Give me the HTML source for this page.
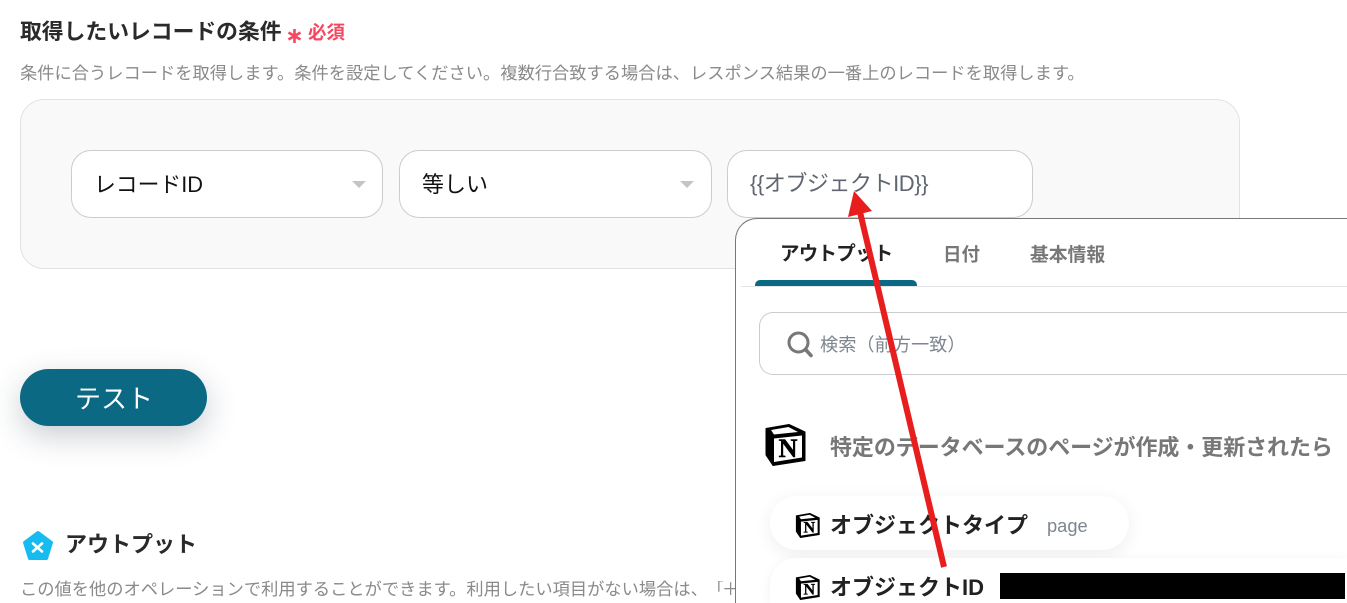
<!DOCTYPE html>
<html lang="ja"><head><meta charset="utf-8">
<style>
html,body{margin:0;padding:0;background:#fff;width:1347px;height:603px;overflow:hidden}
#p{position:relative;width:1347px;height:603px;overflow:hidden;font-family:"Liberation Sans","Noto Sans CJK JP",sans-serif;color:#222}
.t{position:absolute;white-space:nowrap;line-height:1}
.box{position:absolute;box-sizing:border-box;background:#fff;border:1px solid #ccc;border-radius:20px}
.tri{position:absolute;width:0;height:0;border-left:7px solid transparent;border-right:7px solid transparent;border-top:7px solid #c4c4c4}
</style></head><body><div id="p">
<div class="t" style="left:20px;top:21px;font-size:21.8px;font-weight:700;color:#2a2a2a">取得したいレコードの条件</div>
<svg style="position:absolute;left:287px;top:28px" width="15" height="16" viewBox="0 0 15 16"><path d="M7.500 1V15M1.500 4.500L13.500 11.500M13.500 4.500L1.500 11.500" stroke="#f5475f" stroke-width="2.600" fill="none"/></svg>
<div class="t" style="left:308px;top:24px;font-size:18.500px;font-weight:700;color:#f5475f">必須</div>
<div class="t" style="left:20px;top:65px;font-size:17.25px;color:#8a8a8a">条件に合うレコードを取得します。条件を設定してください。複数行合致する場合は、レスポンス結果の一番上のレコードを取得します。</div>

<div style="position:absolute;left:20px;top:99px;width:1220px;height:170px;box-sizing:border-box;background:#f9f9f9;border:1px solid #e2e2e2;border-radius:24px"></div>
<div class="box" style="left:71px;top:150px;width:312px;height:68px"></div>
<div class="t" style="left:94px;top:174px;font-size:21.8px;color:#111">レコードID</div>
<div class="tri" style="left:352px;top:181px"></div>
<div class="box" style="left:399px;top:150px;width:313px;height:68px"></div>
<div class="t" style="left:422px;top:174px;font-size:22px;color:#111">等しい</div>
<div class="tri" style="left:680px;top:181px"></div>
<div class="box" style="left:727px;top:150px;width:306px;height:68px"></div>
<div class="t" style="left:750px;top:173px;font-size:22px;letter-spacing:-.45px;color:#5f6670">{{オブジェクトID}}</div>

<div style="position:absolute;left:20px;top:369px;width:187px;height:57px;border-radius:29px;background:#0b6983;box-shadow:0 10px 30px rgba(40,60,75,.25)"></div>
<div class="t" style="left:75px;top:386px;font-size:26px;color:#fff">テスト</div>

<svg style="position:absolute;left:22px;top:530px" width="32" height="32" viewBox="0 0 32 32"><path d="M16 2.500L29.500 12.500L24.500 28.500H7.500L2.500 12.500z" fill="#16bcf0" stroke="#16bcf0" stroke-width="3" stroke-linejoin="round"/><path d="M11 13.500L20 21.500M20 13.500L11 21.500" stroke="#fff" stroke-width="2.600" stroke-linecap="round" fill="none"/></svg>
<div class="t" style="left:65px;top:534px;font-size:22px;font-weight:700;color:#2a2a2a">アウトプット</div>
<div class="t" style="left:20px;top:581px;font-size:17.25px;color:#8a8a8a">この値を他のオペレーションで利用することができます。利用したい項目がない場合は、</div>
<div class="t" style="left:707px;top:581px;width:16px;overflow:hidden;font-size:17.25px;color:#8a8a8a">「</div>
<div class="t" style="left:722px;top:581px;width:13px;overflow:hidden;font-size:17.25px;color:#8a8a8a">＋</div>

<div style="position:absolute;left:735px;top:218px;width:612px;height:385px;box-sizing:border-box;background:#fff;border:1px solid #777;border-right:0;border-bottom:0;border-radius:22px 0 0 0"></div>
<div class="t" style="left:780px;top:245px;font-size:19.5px;font-weight:700;letter-spacing:-.75px;color:#222">アウトプット</div>
<div class="t" style="left:943px;top:246px;font-size:18.500px;font-weight:700;color:#777">日付</div>
<div class="t" style="left:1030px;top:246px;font-size:18.800px;font-weight:700;color:#777">基本情報</div>
<div style="position:absolute;left:741px;top:286px;width:606px;height:1px;background:#e3e5e8"></div>
<div style="position:absolute;left:755px;top:280px;width:162px;height:6px;background:#0b6983;border-radius:5px 5px 0 0"></div>
<div style="position:absolute;left:759px;top:312px;width:588px;height:63px;box-sizing:border-box;background:#fff;border:1px solid #ccc;border-right:0;border-radius:14px 0 0 14px"></div>
<svg style="position:absolute;left:786px;top:330px" width="28" height="28" viewBox="0 0 28 28"><circle cx="12.500" cy="12.500" r="9.500" stroke="#777" stroke-width="3" fill="none"/><path d="M19.500 19.500L25 25.500" stroke="#777" stroke-width="3.600" stroke-linecap="round"/></svg>
<div class="t" style="left:820px;top:336px;font-size:18.200px;color:#7d8690">検索（前方一致）</div>

<svg style="position:absolute;left:764px;top:424px" width="42" height="42" viewBox="0 0 42 42"><path d="M2 4.500L25 0.500L41 8V36.500L9 41.500L2 31z" fill="#000" stroke="#000" stroke-linejoin="round"/><path d="M10 14.500L38 11.500V33.500L10 38z" fill="#fff"/><path d="M7 6L24.500 3L34 8L10 10.500z" fill="#fff"/><text x="24" y="33" font-family="Liberation Serif" font-size="26" font-weight="700" text-anchor="middle" fill="#000" stroke="#000" stroke-width=".6">N</text></svg>
<div class="t" style="left:830px;top:437px;font-size:22px;font-weight:700;letter-spacing:-.07px;color:#777">特定のデータベースのページが作成・更新されたら</div>

<div style="position:absolute;left:770px;top:496px;width:359px;height:54px;border-radius:27px;background:#fff;box-shadow:0 4px 18px rgba(0,0,0,.07)"></div>
<svg style="position:absolute;left:795px;top:513px" width="25" height="25" viewBox="0 0 42 42"><path d="M2 4.500L25 0.500L41 8V36.500L9 41.500L2 31z" fill="#000" stroke="#000" stroke-linejoin="round"/><path d="M10 14.500L38 11.500V33.500L10 38z" fill="#fff"/><path d="M7 6L24.500 3L34 8L10 10.500z" fill="#fff"/><text x="24" y="33" font-family="Liberation Serif" font-size="27" font-weight="700" text-anchor="middle" fill="#000" stroke="#000" stroke-width=".6">N</text></svg>
<div class="t" style="left:830px;top:515px;font-size:22px;font-weight:700;color:#222">オブジェクトタイプ</div>
<div class="t" style="left:1047px;top:517px;font-size:18.300px;color:#7d8690">page</div>

<div style="position:absolute;left:770px;top:558px;width:577px;height:45px;border-radius:27px 0 0 0;background:#fff;box-shadow:0 2px 12px rgba(0,0,0,.06)"></div>
<svg style="position:absolute;left:795px;top:575px" width="25" height="25" viewBox="0 0 42 42"><path d="M2 4.500L25 0.500L41 8V36.500L9 41.500L2 31z" fill="#000" stroke="#000" stroke-linejoin="round"/><path d="M10 14.500L38 11.500V33.500L10 38z" fill="#fff"/><path d="M7 6L24.500 3L34 8L10 10.500z" fill="#fff"/><text x="24" y="33" font-family="Liberation Serif" font-size="27" font-weight="700" text-anchor="middle" fill="#000" stroke="#000" stroke-width=".6">N</text></svg>
<div class="t" style="left:830px;top:577px;font-size:22px;font-weight:700;color:#222">オブジェクトID</div>
<div style="position:absolute;left:1000px;top:573px;width:345px;height:26px;background:#000"></div>

<svg style="position:absolute;left:0;top:0" width="1347" height="603"><path d="M944 567L860 212" stroke="#e81e1e" stroke-width="6" fill="none"/><path d="M854 191L848 217L872 211z" fill="#e81e1e"/></svg>
</div></body></html>
